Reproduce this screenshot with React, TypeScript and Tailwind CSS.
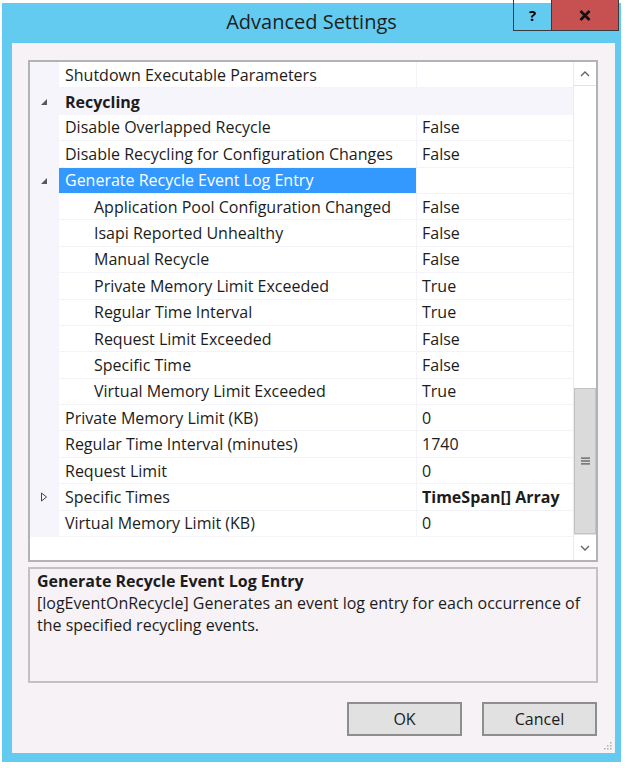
import React from 'react';

interface Row {
  name: string;
  value?: string;
  level: number;
  category?: boolean;
  glyph?: 'open' | 'closed';
  selected?: boolean;
  boldValue?: boolean;
}

const rows: Row[] = [
  { name: 'Shutdown Executable Parameters', value: '', level: 0 },
  { name: 'Recycling', level: 0, category: true, glyph: 'open' },
  { name: 'Disable Overlapped Recycle', value: 'False', level: 0 },
  { name: 'Disable Recycling for Configuration Changes', value: 'False', level: 0 },
  { name: 'Generate Recycle Event Log Entry', value: '', level: 0, glyph: 'open', selected: true },
  { name: 'Application Pool Configuration Changed', value: 'False', level: 1 },
  { name: 'Isapi Reported Unhealthy', value: 'False', level: 1 },
  { name: 'Manual Recycle', value: 'False', level: 1 },
  { name: 'Private Memory Limit Exceeded', value: 'True', level: 1 },
  { name: 'Regular Time Interval', value: 'True', level: 1 },
  { name: 'Request Limit Exceeded', value: 'False', level: 1 },
  { name: 'Specific Time', value: 'False', level: 1 },
  { name: 'Virtual Memory Limit Exceeded', value: 'True', level: 1 },
  { name: 'Private Memory Limit (KB)', value: '0', level: 0 },
  { name: 'Regular Time Interval (minutes)', value: '1740', level: 0 },
  { name: 'Request Limit', value: '0', level: 0 },
  { name: 'Specific Times', value: 'TimeSpan[] Array', level: 0, glyph: 'closed', boldValue: true },
  { name: 'Virtual Memory Limit (KB)', value: '0', level: 0 },
];

function Glyph({ kind }: { kind?: 'open' | 'closed' }) {
  if (kind === 'open') {
    return (
      <svg width="8" height="8" viewBox="0 0 8 8">
        <path d="M7 1 L7 7 L1 7 Z" fill="#595959" />
      </svg>
    );
  }
  if (kind === 'closed') {
    return (
      <svg width="8" height="10" viewBox="0 0 8 10">
        <path d="M1.5 1 L6.5 5 L1.5 9 Z" fill="none" stroke="#444" strokeWidth="1" />
      </svg>
    );
  }
  return null;
}

function GridRow({ row }: { row: Row }) {
  return (
    <div className="flex h-[26.4px]">
      <div className="w-[29px] bg-[#f5f5fb] flex items-center justify-end pr-[11px]">
        <Glyph kind={row.glyph} />
      </div>
      {row.category ? (
        <div className="flex-1 bg-[#f5f5fb] flex items-center pl-[6px] font-bold">{row.name}</div>
      ) : (
        <>
          <div className="w-[357px] border-b border-[#f3f3f9] bg-white flex items-center whitespace-nowrap">
            <div
              className={
                row.selected
                  ? 'h-full w-full bg-[#3399ff] text-white flex items-center pl-[6px]'
                  : row.level === 1
                    ? 'pl-[35px]'
                    : 'pl-[6px]'
              }
            >
              {row.name}
            </div>
          </div>
          <div className="w-px bg-[#f3f3f9]" />
          <div
            className={
              'flex-1 border-b border-[#f3f3f9] bg-white flex items-center pl-[5px] whitespace-nowrap ' +
              (row.boldValue ? 'font-bold' : '')
            }
          >
            {row.value}
          </div>
        </>
      )}
    </div>
  );
}

function Scrollbar() {
  return (
    <div className="w-[23px] flex flex-col bg-white border-l border-[#ececec]">
      <div className="h-[24px] flex items-center justify-center border-b border-[#e3e3e3]">
        <svg width="10" height="6" viewBox="0 0 10 6">
          <path d="M1 5 L5 1 L9 5" fill="none" stroke="#606060" strokeWidth="1.3" />
        </svg>
      </div>
      <div className="h-[302px]" />
      <div className="h-[146px] bg-[#dadada] border border-[#c2c2c2] flex items-center justify-center">
        <svg width="9" height="8" viewBox="0 0 9 8">
          <rect x="0" y="0.5" width="9" height="1.2" fill="#555" />
          <rect x="0" y="3.4" width="9" height="1.2" fill="#555" />
          <rect x="0" y="6.3" width="9" height="1.2" fill="#555" />
        </svg>
      </div>
      <div className="flex-1 flex items-center justify-center border-t border-[#e3e3e3]">
        <svg width="10" height="6" viewBox="0 0 10 6">
          <path d="M1 1 L5 5 L9 1" fill="none" stroke="#606060" strokeWidth="1.3" />
        </svg>
      </div>
    </div>
  );
}

export default function App() {
  return (
    <div
      className="w-[627px] h-[768px] bg-white pt-[3px] pl-[2px] text-[16px] text-[#1c1c1c]"
      style={{ fontFamily: '"Open Sans", "Noto Sans", sans-serif' }}
    >
      <div className="w-[619px] h-[759px] bg-[#62cbef] flex flex-col">
        {/* title bar */}
        <div className="relative h-[40px] flex items-center justify-center">
          <span className="text-[20px] text-[#1e1e1e] pb-[2px]">Advanced Settings</span>
          <div className="absolute right-[2px] top-[-3px] flex h-[31px] border-x border-b border-[#3a3a3a]">
            <div className="w-[38px] flex items-center justify-center border-r border-[#3a3a3a] font-bold text-[15px] text-black">
              ?
            </div>
            <div className="w-[66px] bg-[#c75050] flex items-center justify-center">
              <svg width="12" height="11" viewBox="0 0 12 11">
                <path d="M1.5 1 L10.5 10 M10.5 1 L1.5 10" stroke="#111" strokeWidth="2.6" />
              </svg>
            </div>
          </div>
        </div>

        {/* client area */}
        <div className="ml-[10px] mr-[6px] mb-[9px] flex-1 bg-[#f6f2f6] relative flex flex-col pl-[16px] pt-[17px]">
          {/* property grid */}
          <div className="w-[570px] h-[502px] border-2 border-[#b3b3b3] bg-white flex">
            <div className="w-[543px] flex flex-col">
              {rows.map((row, i) => (
                <GridRow key={i} row={row} />
              ))}
            </div>
            <Scrollbar />
          </div>

          {/* description */}
          <div className="mt-[5px] w-[570px] h-[116px] border-2 border-[#c4c0c4] px-[7px] pt-[1px] leading-[22px]">
            <div className="font-bold">Generate Recycle Event Log Entry</div>
            <div>
              [logEventOnRecycle] Generates an event log entry for each occurrence of the specified recycling events.
            </div>
          </div>

          {/* buttons */}
          <div className="mt-[19px] w-[569px] flex justify-end gap-[20px]">
            <button className="w-[115px] h-[34px] bg-[#e1e1e1] border-2 border-[#8e8e8e] text-[16px]">OK</button>
            <button className="w-[115px] h-[34px] bg-[#e1e1e1] border-2 border-[#8e8e8e] text-[16px]">Cancel</button>
          </div>

          {/* resize grip */}
          <div className="absolute right-[3px] bottom-[3px]">
            <svg width="9" height="9" viewBox="0 0 9 9">
              <rect x="7" y="1" width="1.5" height="1.5" fill="#b0b0b0" />
              <rect x="4" y="4" width="1.5" height="1.5" fill="#b0b0b0" />
              <rect x="7" y="4" width="1.5" height="1.5" fill="#b0b0b0" />
              <rect x="1" y="7" width="1.5" height="1.5" fill="#b0b0b0" />
              <rect x="4" y="7" width="1.5" height="1.5" fill="#b0b0b0" />
              <rect x="7" y="7" width="1.5" height="1.5" fill="#b0b0b0" />
            </svg>
          </div>
        </div>
      </div>
    </div>
  );
}
